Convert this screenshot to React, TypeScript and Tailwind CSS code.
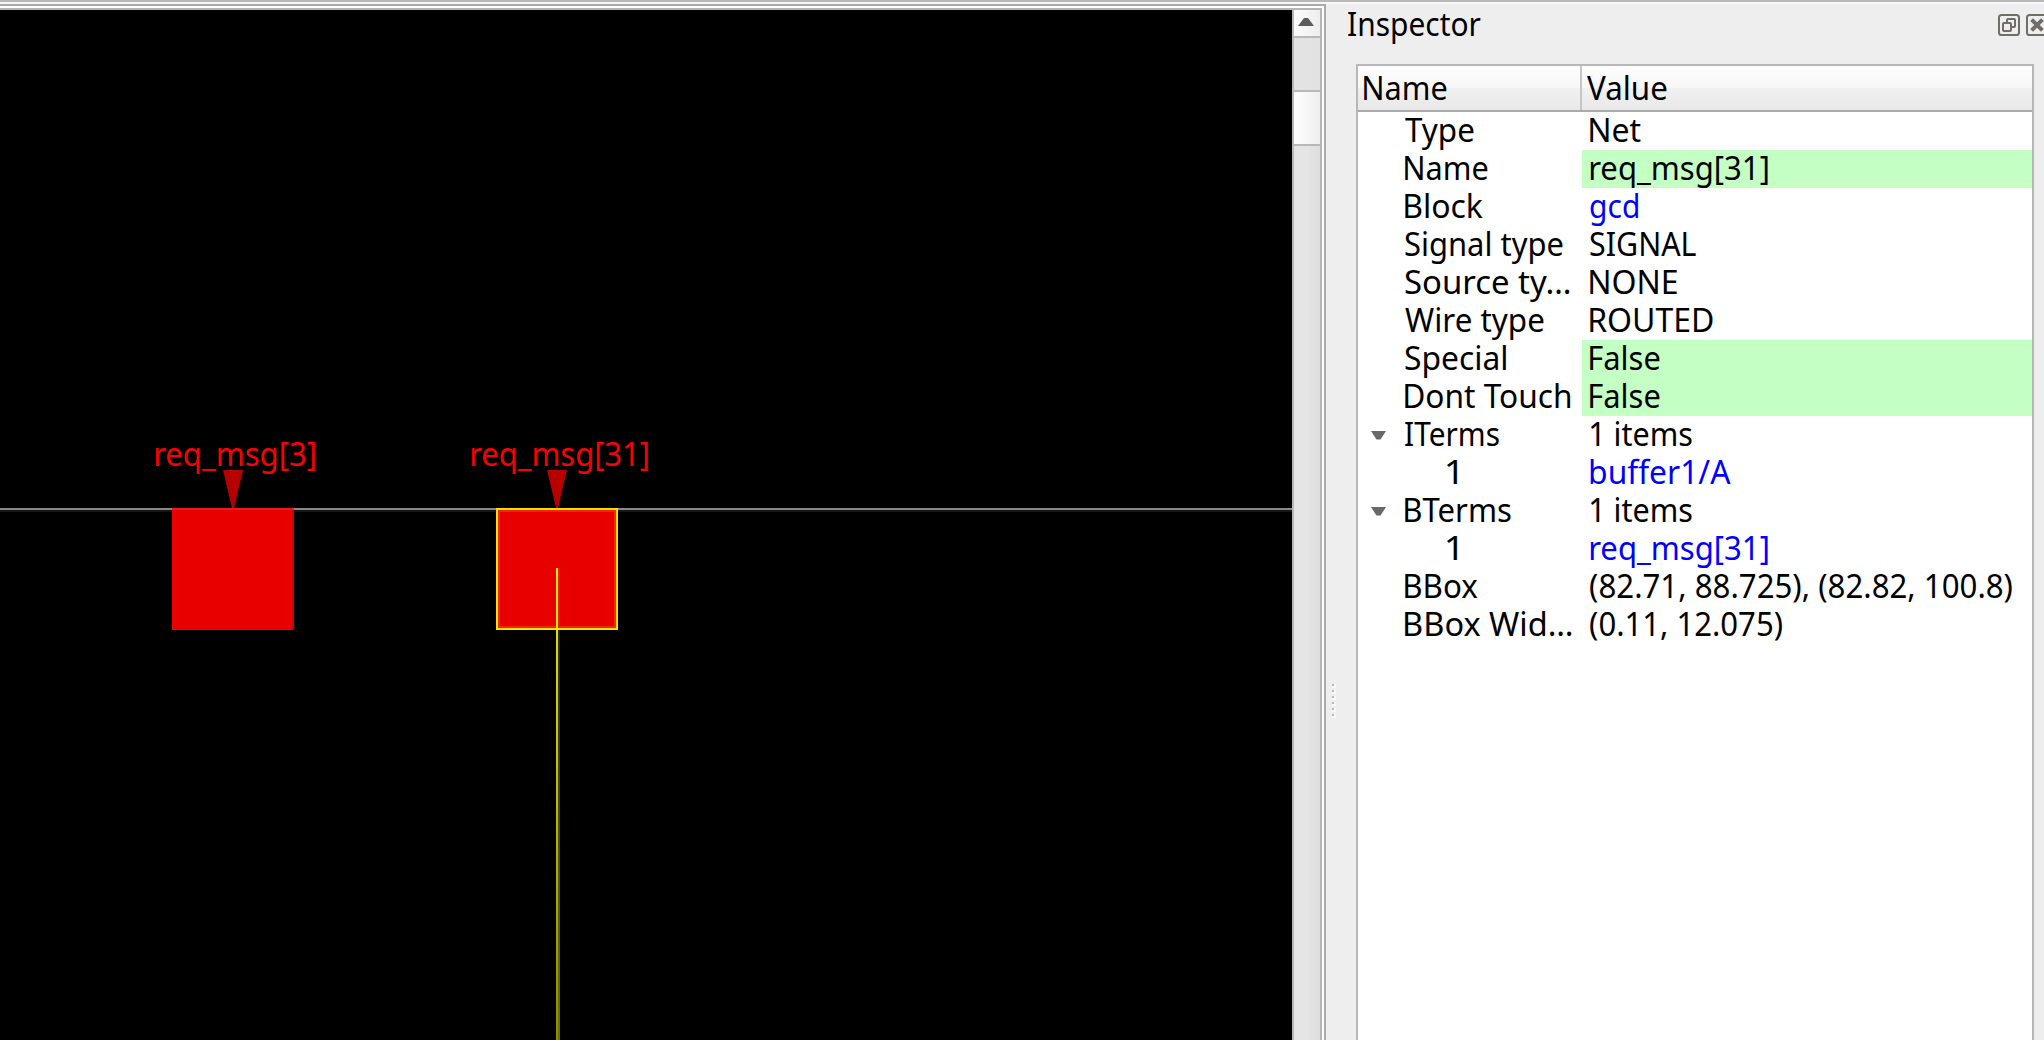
import { useLayoutEffect, useRef } from "react";

/** Single-line text whose inked area is fitted to a given width. */
function Label({ text, w, className = "" }: { text: string; w: number; className?: string }) {
  const ref = useRef<HTMLSpanElement>(null);
  useLayoutEffect(() => {
    const el = ref.current;
    const ctx = document.createElement("canvas").getContext("2d");
    if (!el || !ctx) return;
    const cs = getComputedStyle(el);
    ctx.font = `${cs.fontWeight} ${cs.fontSize} ${cs.fontFamily}`;
    const m = ctx.measureText(text);
    const left = -m.actualBoundingBoxLeft;
    const s = w / (m.actualBoundingBoxRight + m.actualBoundingBoxLeft);
    el.style.transform = `translateX(${left * -s}px) scaleX(${s})`;
  }, [text, w]);
  return (
    <span className="block overflow-visible whitespace-nowrap" style={{ width: w }}>
      <span ref={ref} className={`inline-block origin-left ${className}`}>{text}</span>
    </span>
  );
}

type Row = {
  name: string;
  nw: number;
  value: string;
  vw: number;
  green?: boolean;
  link?: boolean;
  open?: boolean;
  child?: boolean;
};

const rows: Row[] = [
  { name: "Type", nw: 69, value: "Net", vw: 51 },
  { name: "Name", nw: 83, value: "req_msg[31]", vw: 178, green: true },
  { name: "Block", nw: 78, value: "gcd", vw: 48, link: true },
  { name: "Signal type", nw: 158, value: "SIGNAL", vw: 106 },
  { name: "Source ty…", nw: 165, value: "NONE", vw: 87 },
  { name: "Wire type", nw: 139, value: "ROUTED", vw: 123 },
  { name: "Special", nw: 101, value: "False", vw: 70, green: true },
  { name: "Dont Touch", nw: 165, value: "False", vw: 70, green: true },
  { name: "ITerms", nw: 94, value: "1 items", vw: 102, open: true },
  { name: "1", nw: 11, value: "buffer1/A", vw: 141, link: true, child: true },
  { name: "BTerms", nw: 106, value: "1 items", vw: 102, open: true },
  { name: "1", nw: 11, value: "req_msg[31]", vw: 178, link: true, child: true },
  { name: "BBox", nw: 73, value: "(82.71, 88.725), (82.82, 100.8)", vw: 422 },
  { name: "BBox Wid…", nw: 167, value: "(0.11, 12.075)", vw: 192 },
];

function TreeRow({ r }: { r: Row }) {
  return (
    <div className="flex h-[38px] shrink-0 leading-[34px]">
      <div className="flex w-[224px] shrink-0">
        <div className="flex h-full w-[47px] shrink-0 items-center pl-[13px]">
          {r.open && (
            <svg width="15" height="9" viewBox="0 0 15 9">
              <path d="M0 0H15L9.5 8.5H5.5Z" fill="#686868" />
            </svg>
          )}
        </div>
        {r.child && <div className="w-[41px] shrink-0" />}
        <Label text={r.name} w={r.nw} />
      </div>
      <div
        className={`flex grow pl-[8px] ${r.green ? "bg-[#c4ffc4]" : ""} ${r.link ? "text-[#0000ff]" : ""}`}
      >
        <Label text={r.value} w={r.vw} />
      </div>
    </div>
  );
}

function LayoutView() {
  return (
    <div className="relative w-[1292px] shrink-0 overflow-hidden bg-black text-[#fa0000]">
      <svg className="absolute left-0 top-0" width="1292" height="1030" viewBox="0 10 1292 1030" shapeRendering="crispEdges">
        <defs>
          <linearGradient id="wireLeft" x1="0" y1="568" x2="0" y2="1040" gradientUnits="userSpaceOnUse">
            <stop offset="0" stopColor="#e9e900" />
            <stop offset="1" stopColor="#8c8c00" />
          </linearGradient>
          <linearGradient id="wireRight" x1="0" y1="568" x2="0" y2="1040" gradientUnits="userSpaceOnUse">
            <stop offset="0" stopColor="#181800" />
            <stop offset="1" stopColor="#707000" />
          </linearGradient>
        </defs>
        <rect x="0" y="508" width="1292" height="2" fill="#888" />
        <rect x="0" y="510" width="1292" height="2" fill="#161616" />
        <rect x="172" y="508" width="122" height="122" fill="#e80000" />
        <rect x="172" y="508" width="122" height="2" fill="#f01820" />
        <rect x="292" y="510" width="2" height="120" fill="#d00000" />
        <rect x="496" y="508" width="122" height="122" fill="#e80000" />
        <rect x="499" y="511" width="116" height="116" fill="none" stroke="#f02800" strokeWidth="2" />
        <rect x="497" y="509" width="120" height="120" fill="none" stroke="#ffe000" strokeWidth="2" />
        <rect x="556" y="568" width="2" height="62" fill="#fff000" />
        <rect x="558" y="568" width="2" height="60" fill="#ee1800" />
        <rect x="556" y="630" width="2" height="410" fill="url(#wireLeft)" />
        <rect x="558" y="630" width="2" height="410" fill="url(#wireRight)" />
        <g fill="#b60000" shapeRendering="geometricPrecision">
          <path d="M223 470H243L234 508H232Z" />
          <path d="M547 470H567L558 508H556Z" />
        </g>
      </svg>
      <div className="absolute left-[155px] top-[424px] leading-[38px]">
        <Label text="req_msg[3]" w={160} />
      </div>
      <div className="absolute left-[471px] top-[424px] leading-[38px]">
        <Label text="req_msg[31]" w={177} />
      </div>
    </div>
  );
}

function ScrollBar() {
  return (
    <div className="flex w-[30px] shrink-0 flex-col border-r-2 border-[#b4b4b4]">
      <div className="flex h-[26px] shrink-0 items-start justify-start border-l-2 border-[#b8b8b8] bg-gradient-to-r from-[#fcfcfc] to-[#eeeeee] pl-[4px] pt-[8px]">
        <svg width="16" height="8" viewBox="0 0 16 8">
          <path d="M6 0H10L16 8H0Z" fill="#5c5c5c" />
        </svg>
      </div>
      <div className="h-[54px] shrink-0 border-l-2 border-t-2 border-[#b8b8b8] bg-gradient-to-r from-[#e4e4e4] to-[#e2e2e2]" />
      <div className="h-[56px] shrink-0 border-y-2 border-l-2 border-[#b8b8b8] bg-gradient-to-r from-white to-[#eeeeee]" />
      <div className="grow border-l-2 border-[#b8b8b8] bg-gradient-to-r from-[#e4e4e4] via-[#e5e5e5] to-[#dedede]" />
    </div>
  );
}

function SplitHandle() {
  return (
    <div className="flex w-[22px] shrink-0 flex-col gap-[2px] pl-[6px] pt-[680px]">
      {[0, 1, 2, 3, 4, 5].map((i) => (
        <div key={i} className="size-[4px] shrink-0 bg-[#f8f8f8]">
          <div className="size-[2px] bg-[#b8b8b8]" />
        </div>
      ))}
    </div>
  );
}

function FloatIcon() {
  return (
    <svg width="22" height="22" viewBox="0 0 11 11" fill="none" stroke="#6f6f67" className="shrink-0">
      <rect x="0.5" y="0.5" width="10" height="10" rx="1.3" />
      <rect x="2.5" y="4.5" width="4" height="4" rx="0.5" />
      <path d="M4.5 4V3Q4.5 2.5 5 2.5H8Q8.5 2.5 8.5 3V6Q8.5 6.5 8 6.5H7" />
    </svg>
  );
}

function CloseIcon() {
  return (
    <svg width="22" height="22" viewBox="0 0 11 11" fill="none" stroke="#6f6f67" className="shrink-0">
      <rect x="0.5" y="0.5" width="10" height="10" rx="1.3" />
      <path d="M2.8 2.8L8.2 8.2M8.2 2.8L2.8 8.2" strokeWidth="2" />
    </svg>
  );
}

function Inspector() {
  return (
    <div className="flex min-w-0 grow flex-col">
      <div className="flex h-[60px] shrink-0 justify-between overflow-hidden">
        <div className="leading-[38px]">
          <Label text="Inspector" w={133} />
        </div>
        <div className="flex w-[46px] shrink-0 gap-[6px] pt-[10px]">
          <FloatIcon />
          <CloseIcon />
        </div>
      </div>
      <div className="ml-[8px] mr-[10px] flex grow flex-col border-x-2 border-t-2 border-[#b8b8b8] bg-white">
        <div className="flex h-[46px] shrink-0 border-b-2 border-[#aaaaaa] bg-[linear-gradient(#fdfdfd,#f7f7f7_50%,#f1f1f1_50%,#e8e8e8)] leading-[42px]">
          <div className="w-[224px] shrink-0 border-r-2 border-[#c6c6c6] pl-[6px]">
            <Label text="Name" w={83} />
          </div>
          <div className="pl-[5px]">
            <Label text="Value" w={80} />
          </div>
        </div>
        {rows.map((r, i) => (
          <TreeRow key={i} r={r} />
        ))}
      </div>
    </div>
  );
}

export default function App() {
  return (
    <div className="flex h-[1040px] w-[2044px] flex-col overflow-hidden border-t-2 border-[#b8b8b8] bg-[#eeeeee] font-['Noto_Sans',sans-serif] text-[33.5px] text-black">
      <div className="h-[2px] shrink-0 bg-[#f8f8f8]" />
      <div className="flex grow">
        <div className="flex w-[1326px] shrink-0 border-r-2 border-t-2 border-[#aaaaaa] bg-white pr-[2px] pt-[2px]">
          <div className="flex grow border-t-2 border-[#b4b4b4]">
            <LayoutView />
            <ScrollBar />
          </div>
        </div>
        <SplitHandle />
        <Inspector />
      </div>
    </div>
  );
}
